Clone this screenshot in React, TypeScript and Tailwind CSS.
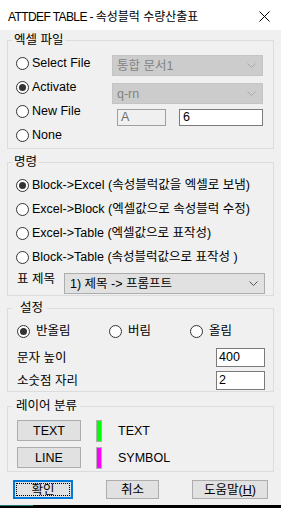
import React from "react";

const FONT = "font-['Liberation_Sans','Noto_Sans_CJK_KR',sans-serif]";

function Radio({ checked }: { checked?: boolean }) {
  return (
    <span className="w-[13px] h-[13px] rounded-full border border-[#333333] bg-white flex items-center justify-center shrink-0">
      {checked && <span className="w-[7px] h-[7px] rounded-full bg-[#333333]" />}
    </span>
  );
}

function RadioRow({ label, checked }: { label: string; checked?: boolean }) {
  return (
    <div className="h-[24px] flex items-center gap-[3px]">
      <Radio checked={checked} />
      <span className="leading-[16px] whitespace-nowrap">{label}</span>
    </div>
  );
}

function Chevron({ color }: { color: string }) {
  return (
    <svg width="9" height="5" viewBox="0 0 9 5" className="shrink-0">
      <path d="M0.5 0.5 L4.5 4.5 L8.5 0.5" fill="none" stroke={color} strokeWidth="1" />
    </svg>
  );
}

function Group({
  label,
  className,
  legendClass,
  children,
}: {
  label: string;
  className: string;
  legendClass?: string;
  children: React.ReactNode;
}) {
  return (
    <fieldset className={"border border-[#dcdcdc] mx-[7px] min-w-0 " + className}>
      <legend className={"ml-[4px] leading-[14px] " + (legendClass ?? "px-[2px]")}>{label}</legend>
      {children}
    </fieldset>
  );
}

export default function App() {
  return (
    <div className={"w-[281px] h-[508px] bg-[#f0f0f0] flex flex-col overflow-hidden text-[12.5px] text-black " + FONT}>
      {/* Title bar */}
      <div className="h-[30px] bg-white flex items-center pl-[8px] pr-[11px] shrink-0">
        <div className="flex-1 pt-[3px] whitespace-nowrap leading-[14px]">
          <span className="text-[12px] tracking-[-0.6px]">ATTDEF TABLE - </span>
          <span className="text-[12px]">속성블럭 수량산출표</span>
        </div>
        <svg width="11" height="11" viewBox="0 0 11 11" className="mt-[2px]">
          <path d="M0.5 0.5 L10.5 10.5 M10.5 0.5 L0.5 10.5" stroke="#000" strokeWidth="1" />
        </svg>
      </div>

      {/* Group 1 */}
      <Group label="엑셀 파일" className="mt-[3px] pb-[1px]">
        <div className="flex pl-[8px]">
          <div className="w-[96px] flex flex-col pt-[4px]">
            <RadioRow label="Select File" />
            <RadioRow label="Activate" checked />
            <RadioRow label="New File" />
            <RadioRow label="None" />
          </div>
          <div className="flex flex-col pt-[8px] w-[151px]">
            <div className="h-[21px] bg-[#cccccc] border border-[#c4c4c4] flex items-center pl-[4px] pr-[6px]">
              <span className="flex-1 text-[#838383] leading-[16px]">통합 문서1</span>
              <Chevron color="#a8a8a8" />
            </div>
            <div className="h-[21px] mt-[7px] bg-[#cccccc] border border-[#c4c4c4] flex items-center pl-[4px] pr-[6px]">
              <span className="flex-1 text-[#838383] leading-[16px]">q-rn</span>
              <Chevron color="#a8a8a8" />
            </div>
            <div className="flex mt-[5px] pl-[5px] gap-[13px]">
              <div className="w-[49px] h-[17px] border border-[#a0a0a0] bg-[#f0f0f0] text-[#6d6d6d] leading-[15px] pl-[3px]">
                A
              </div>
              <div className="w-[84px] h-[17px] border border-[#7a7a7a] bg-white leading-[15px] pl-[3px]">
                6
              </div>
            </div>
          </div>
        </div>
      </Group>

      {/* Group 2 */}
      <Group label="명령" className="mt-[6px] pb-[1px]">
        <div className="flex flex-col pl-[8px] pt-[4px]">
          <RadioRow label="Block->Excel (속성블럭값을 엑셀로 보냄)" checked />
          <RadioRow label="Excel->Block (엑셀값으로 속성블럭 수정)" />
          <RadioRow label="Excel->Table (엑셀값으로 표작성)" />
          <RadioRow label="Block->Table (속성블럭값으로 표작성 )" />
          <div className="flex items-start mt-[4px]">
            <span className="w-[48px] pl-[1px] leading-[14px] -mt-[1px]">표 제목</span>
            <div className="w-[201px] h-[21px] bg-[#e1e1e1] border border-[#adadad] flex items-center pl-[5px] pr-[6px]">
              <span className="flex-1 leading-[16px]">1) 제목 -&gt; 프롬프트</span>
              <Chevron color="#555555" />
            </div>
          </div>
        </div>
      </Group>

      {/* Group 3 */}
      <Group label="설정" legendClass="pl-[8px] pr-[4px]" className="mt-[5px] pb-[1px]">
        <div className="flex flex-col pl-[9px] pr-[8px] pt-[4px]">
          <div className="h-[24px] flex items-center">
            <div className="w-[92px] flex items-center gap-[6px]">
              <Radio checked />
              <span className="leading-[16px]">반올림</span>
            </div>
            <div className="w-[81px] flex items-center gap-[6px]">
              <Radio />
              <span className="leading-[16px]">버림</span>
            </div>
            <div className="flex items-center gap-[6px]">
              <Radio />
              <span className="leading-[16px]">올림</span>
            </div>
          </div>
          <div className="flex items-center justify-between mt-[5px] h-[19px]">
            <span className="leading-[16px]">문자 높이</span>
            <div className="w-[49px] h-[19px] border border-[#7a7a7a] bg-white leading-[17px] pl-[2px]">400</div>
          </div>
          <div className="flex items-center justify-between mt-[4px] h-[19px]">
            <span className="leading-[16px]">소숫점 자리</span>
            <div className="w-[49px] h-[19px] border border-[#7a7a7a] bg-white leading-[17px] pl-[2px]">2</div>
          </div>
        </div>
      </Group>

      {/* Group 4 */}
      <Group label="레이어 분류" legendClass="pl-[4px] pr-[3px]" className="mt-[7px] pb-[3px]">
        <div className="flex flex-col pl-[9px] pt-[7px]">
          <div className="flex items-center h-[21px]">
            <div className="w-[64px] h-[21px] bg-[#e1e1e1] border border-[#adadad] flex items-center justify-center leading-[16px]">
              TEXT
            </div>
            <div className="ml-[15px] w-[6px] h-[22px] bg-[#00ff00] border border-[#b0b0b0]" />
            <span className="ml-[16px] leading-[16px]">TEXT</span>
          </div>
          <div className="flex items-center h-[21px] mt-[6px]">
            <div className="w-[64px] h-[21px] bg-[#e1e1e1] border border-[#adadad] flex items-center justify-center leading-[16px]">
              LINE
            </div>
            <div className="ml-[15px] w-[6px] h-[22px] bg-[#ff00ff] border border-[#b0b0b0]" />
            <span className="ml-[16px] leading-[16px]">SYMBOL</span>
          </div>
        </div>
      </Group>

      {/* Buttons */}
      <div className="flex pl-[13px] gap-[33px] mt-[8px] shrink-0">
        <div className="w-[60px] h-[19px] bg-[#e1e1e1] border-2 border-[#0078d7] p-[1px]">
          <div className="w-full h-full border border-dotted border-black flex items-center justify-center leading-[14px]">
            확인
          </div>
        </div>
        <div className="w-[53px] h-[19px] bg-[#e1e1e1] border border-[#adadad] flex items-center justify-center leading-[16px]">
          취소
        </div>
        <div className="w-[76px] h-[19px] bg-[#e1e1e1] border border-[#adadad] flex items-center justify-center leading-[16px]">
          도움말(<span className="underline">H</span>)
        </div>
      </div>

      <div className="flex-1" />
      <div className="h-[3px] bg-black shrink-0 flex">
        <div className="w-[33px] h-[1px] bg-[#1f7a7a]" />
      </div>
    </div>
  );
}
